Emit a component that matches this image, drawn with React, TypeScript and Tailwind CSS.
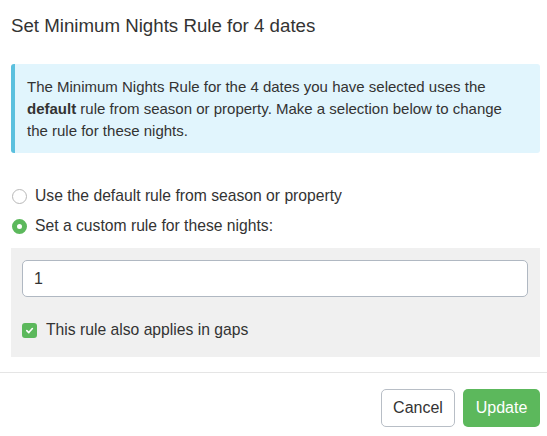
import React from "react";

export default function App() {
  return (
    <div
      className="w-[547px] h-[436px] bg-white text-[#333333] overflow-hidden"
      style={{ fontFamily: '"Liberation Sans", Arial, sans-serif' }}
    >
      <div className="pt-[13px] px-[11px]">
        <h1 className="text-[18.7px] leading-[26px] font-normal">Set Minimum Nights Rule for 4 dates</h1>
      </div>
      <div className="px-[11px] pr-[7px]">
        <div className="mt-[25px] bg-[#e1f5fd] border-l-4 border-[#5bc0de] rounded-[3px] pl-[12px] pr-[15px] pt-[12px] pb-[11px] text-[15px] leading-[22px]">
          The Minimum Nights Rule for the 4 dates you have selected uses the <b>default</b> rule from season or property. Make a selection below to change the rule for these nights.
        </div>

        <div className="mt-[32px] flex items-center h-[22px] text-[15.7px]">
          <span className="ml-[1px] w-[15px] h-[15px] rounded-full border border-[#b8b8b8] bg-white shrink-0" />
          <span className="ml-[8px]">Use the default rule from season or property</span>
        </div>
        <div className="mt-[8px] flex items-center h-[22px] text-[15.7px]">
          <span className="ml-[1px] w-[15px] h-[15px] rounded-full border-[5px] border-[#5cb85c] bg-white shrink-0" />
          <span className="ml-[8px]">Set a custom rule for these nights:</span>
        </div>

        <div className="mt-[11px] bg-[#f0f0f0] pl-[11px] pr-[12px] pt-[12px] pb-[19px]">
          <div className="h-[37px] bg-white border border-[#b0b8c2] rounded-[5px] flex items-center pl-[11px] text-[16px]">
            1
          </div>
          <div className="mt-[25px] flex items-center h-[16px] text-[15.7px]">
            <span className="w-[15px] h-[15px] rounded-[3px] bg-[#5cb85c] flex items-center justify-center shrink-0">
              <svg width="9" height="9" viewBox="0 0 10 10" fill="none">
                <path d="M2 5.2 L4.2 7.3 L8.2 2.8" stroke="white" strokeWidth="1.8" strokeLinecap="round" strokeLinejoin="round" />
              </svg>
            </span>
            <span className="ml-[9px]">This rule also applies in gaps</span>
          </div>
        </div>
      </div>

      <div className="mt-[15px] border-t border-[#e5e5e5] pt-[16px] pr-[7px] flex justify-end gap-[8px]">
        <button className="h-[38px] w-[74px] border border-[#b8bec6] rounded-[5px] bg-white text-[16px] text-[#333]">Cancel</button>
        <button className="h-[38px] w-[77px] rounded-[5px] bg-[#5cb85c] text-[16px] text-white">Update</button>
      </div>
    </div>
  );
}
